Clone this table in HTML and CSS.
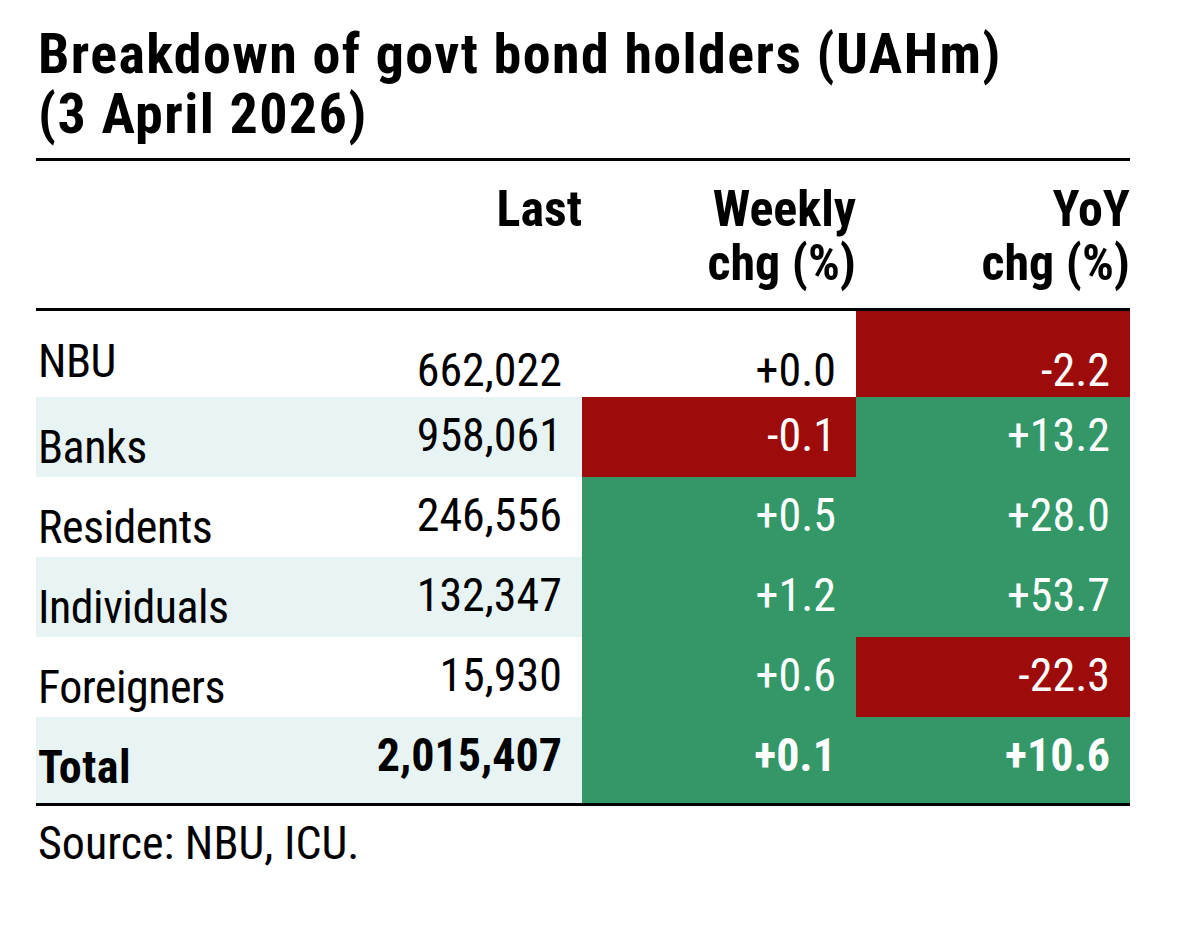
FILE: index.html
```html
<!DOCTYPE html>
<html lang="en">
<head>
<meta charset="utf-8">
<title>Breakdown of govt bond holders</title>
<link rel="stylesheet" href="styles.css">
</head>
<body>
<div class="card">
  <h1 class="title">Breakdown of govt bond holders (UAHm)<br>(3 April 2026)</h1>
  <table class="tbl">
    <thead>
      <tr class="head">
        <th class="lbl"></th>
        <th class="num">Last</th>
        <th class="chg">Weekly<br>chg (%)</th>
        <th class="chg">YoY<br>chg (%)</th>
      </tr>
    </thead>
    <tbody>
      <tr class="row first">
        <td class="lbl">NBU</td>
        <td class="num">662,022</td>
        <td class="chg">+0.0</td>
        <td class="chg neg">-2.2</td>
      </tr>
      <tr class="row alt">
        <td class="lbl">Banks</td>
        <td class="num">958,061</td>
        <td class="chg neg">-0.1</td>
        <td class="chg pos">+13.2</td>
      </tr>
      <tr class="row">
        <td class="lbl">Residents</td>
        <td class="num">246,556</td>
        <td class="chg pos">+0.5</td>
        <td class="chg pos">+28.0</td>
      </tr>
      <tr class="row alt">
        <td class="lbl">Individuals</td>
        <td class="num">132,347</td>
        <td class="chg pos">+1.2</td>
        <td class="chg pos">+53.7</td>
      </tr>
      <tr class="row">
        <td class="lbl">Foreigners</td>
        <td class="num">15,930</td>
        <td class="chg pos">+0.6</td>
        <td class="chg neg">-22.3</td>
      </tr>
      <tr class="row alt total">
        <td class="lbl">Total</td>
        <td class="num">2,015,407</td>
        <td class="chg pos">+0.1</td>
        <td class="chg pos">+10.6</td>
      </tr>
    </tbody>
  </table>
  <p class="source">Source: NBU, ICU.</p>
</div>
</body>
</html>
```
FILE: styles.css
```css
html, body {
  margin: 0;
  padding: 0;
  background: #ffffff;
}

body {
  font-family: Roboto, "Liberation Sans", sans-serif;
  font-stretch: 75%;
  color: #000000;
}

.card {
  width: 1094px;
  padding: 24px 0 0 36px;
}

.title {
  margin: 0;
  padding-left: 2px;
  font-size: 56px;
  line-height: 60px;
  font-weight: 700;
  letter-spacing: 1.4px;
}

.tbl {
  margin-top: 14px;
  width: 1094px;
  border-collapse: collapse;
  table-layout: fixed;
  border-top: 3px solid #000;
  border-bottom: 3px solid #000;
}

.head th {
  height: 150px;
  padding: 21px 0 0;
  vertical-align: top;
  font-size: 50px;
  line-height: 54px;
  font-weight: 700;
  text-align: right;
  border-bottom: 3px solid #000;
  box-sizing: border-box;
}

.head th.lbl { width: 294px; }
.head th.num { width: 252px; }
.head th.chg { width: 274px; }

.row td {
  padding: 0;
  font-size: 46px;
  line-height: 46px;
  vertical-align: top;
  height: 80px;
  box-sizing: border-box;
}

.row.first td { height: 87px; }
.row.total td { height: 88px; }

.row td.lbl {
  text-align: left;
  padding-left: 2px;
  padding-top: 27px;
  letter-spacing: -0.5px;
}

.row.total td.lbl {
  letter-spacing: 0.5px;
}

.row td.num,
.row td.chg {
  text-align: right;
  padding-right: 20px;
  padding-top: 15px;
}

.row.first td.num,
.row.first td.chg {
  padding-top: 36px;
}

.row.alt td.lbl,
.row.alt td.num {
  background: #e8f4f4;
}

.row td.pos {
  background: #339768;
  color: #ffffff;
}

.row td.neg {
  background: #9e0b0b;
  color: #ffffff;
}

.row.total td {
  font-weight: 700;
}

.source {
  margin: 14px 0 0;
  padding-left: 2px;
  font-size: 46px;
  line-height: 46px;
}
```
